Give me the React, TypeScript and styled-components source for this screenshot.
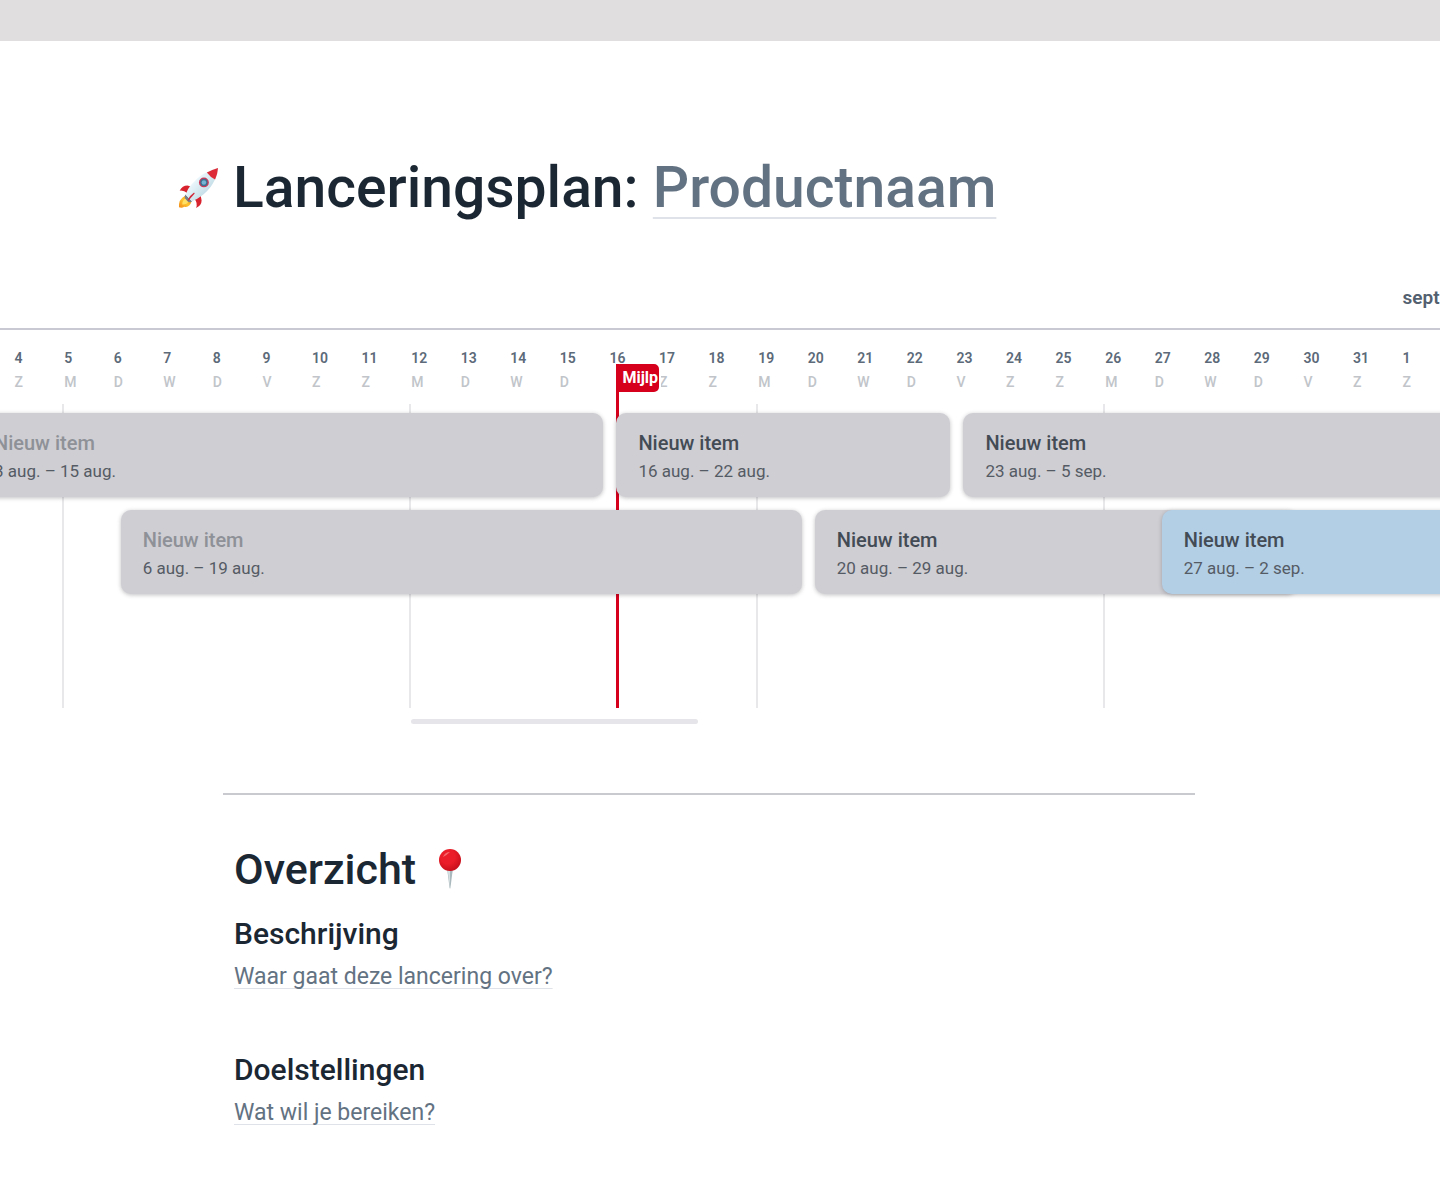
import React from "react";
import styled, { createGlobalStyle } from "styled-components";

const DAYS_SHOWN = 35;

const GlobalStyle = createGlobalStyle`
  *, *::before, *::after { box-sizing: border-box; }
  body {
    margin: 0;
    background: #ffffff;
    color: #1b2733;
    font-family: Roboto, "Liberation Sans", sans-serif;
  }
  h1, h2, h3, p { margin: 0; }
`;

const TopBar = styled.header`
  height: 41px;
  background: #e0dedf;
`;

const Column = styled.div`
  max-width: 972px;
  margin: 0 auto;
`;

const Page = styled.main`
  padding-bottom: 48px;
  overflow: hidden;
`;

const Inset = styled.div`
  padding-right: 22px;
`;

const TitleRow = styled.div`
  display: flex;
  align-items: center;
  gap: 14px;
  margin-left: -46px;
  padding: 113px 0 64px;
`;

const Title = styled.h1`
  font-size: 57px;
  font-weight: 500;
  line-height: 68px;
`;

const Blank = styled.span<{ $offset: number; $thickness: number }>`
  color: #637282;
  text-decoration: underline;
  text-decoration-color: #dfe2e8;
  text-decoration-thickness: ${(p) => p.$thickness}px;
  text-decoration-skip-ink: none;
  text-underline-offset: ${(p) => p.$offset}px;
`;

const Timeline = styled.section`
  overflow: hidden;
`;

const Track = styled.div`
  width: 1735px;
  margin-left: -37px;
`;

const DayGrid = styled.div`
  display: grid;
  grid-template-columns: repeat(${DAYS_SHOWN}, minmax(0, 1fr));
`;

const MonthRow = styled(DayGrid)`
  padding-bottom: 18px;
  border-bottom: 2px solid #c9c9d4;
`;

const Month = styled.span<{ $day: number }>`
  grid-column: ${(p) => p.$day + 1} / span 3;
  padding-left: 2px;
  color: #52606f;
  font-size: 19px;
  font-weight: 600;
  line-height: 24px;
`;

const Board = styled.div`
  position: relative;
  padding-top: 16px;
`;

const Day = styled.div`
  display: flex;
  flex-direction: column;
  padding-left: 2px;
  font-size: 14px;
  line-height: 24px;
`;

const DayNumber = styled.span`
  color: #5c6a79;
  font-weight: 600;
`;

const DayLetter = styled.span`
  color: #c1c5ca;
  font-weight: 500;
`;

const Lanes = styled(DayGrid)`
  grid-template-rows: 84px 84px;
  align-content: start;
  row-gap: 13px;
  height: 304px;
  margin-top: 10px;
  padding-top: 9px;
`;

const WeekLine = styled.div<{ $day: number }>`
  grid-column: ${(p) => p.$day + 1};
  grid-row: 1;
  height: 304px;
  margin-top: -9px;
  border-left: 2px solid #e8e8ea;
`;

const Item = styled.button<{ $start: number; $end: number; $lane: number; $blue?: boolean }>`
  z-index: 1;
  grid-column: ${(p) => p.$start + 1} / ${(p) => p.$end + 2};
  grid-row: ${(p) => p.$lane};
  display: flex;
  flex-direction: column;
  margin: 0 4px 0 9px;
  padding: 16px 22px;
  border: 0;
  border-radius: 10px;
  background: ${(p) => (p.$blue ? "#b3cfe6" : "#cfced3")};
  box-shadow: 0 1px 4px rgba(30, 30, 40, 0.28);
  font-family: inherit;
  line-height: 28px;
  text-align: left;
  white-space: nowrap;
`;

const ItemName = styled.span<{ $past?: boolean }>`
  color: ${(p) => (p.$past ? "#8e9197" : "#434b55")};
  font-size: 20px;
  font-weight: 500;
`;

const ItemDates = styled.span`
  color: #555b64;
  font-size: 17px;
`;

const MilestoneLine = styled.div<{ $day: number }>`
  position: absolute;
  top: 34px;
  bottom: 0;
  left: calc(100% * ${(p) => p.$day} / ${DAYS_SHOWN} + 9px);
  width: 3px;
  background: #d6001c;
`;

const MilestoneFlag = styled.button`
  display: block;
  width: 43px;
  height: 28px;
  padding: 0 0 0 6px;
  border: 0;
  border-radius: 4px 5px 5px 0;
  background: #d6001c;
  box-shadow: 2px 0 0 #ffffff;
  color: #ffffff;
  font-family: inherit;
  font-size: 16px;
  font-weight: 700;
  line-height: 28px;
  text-align: left;
  overflow: hidden;
`;

const ScrollThumb = styled.div`
  width: 287px;
  height: 5px;
  margin: 11px 0 0 411px;
  border-radius: 3px;
  background: #e6e6ea;
`;

const Divider = styled.hr`
  height: 2px;
  margin: 69px 0 48px;
  border: 0;
  background: #c9cacf;
`;

const TextBlock = styled.div`
  padding: 0 11px;
`;

const Overview = styled.h2`
  display: flex;
  align-items: center;
  gap: 21px;
  font-size: 43px;
  font-weight: 500;
  line-height: 52px;
`;

const Question = styled.section`
  display: flex;
  flex-direction: column;
  gap: 11px;
  padding: 21px 0 40px;
`;

const QuestionTitle = styled.h3`
  font-size: 30px;
  font-weight: 500;
  line-height: 36px;
`;

const QuestionText = styled.p`
  font-size: 23px;
  line-height: 28px;
`;

const RocketIcon = () => (
  <svg width="42" height="42" viewBox="22 20 128 128" aria-hidden="true">
    <defs>
      <linearGradient id="hull" x1="0" y1="0" x2="1" y2="1">
        <stop offset="0.3" stopColor="#eef9fd" />
        <stop offset="0.75" stopColor="#bfdae5" />
      </linearGradient>
      <linearGradient id="flame" x1="0" y1="1" x2="1" y2="0">
        <stop offset="0" stopColor="#f28a1c" />
        <stop offset="0.5" stopColor="#fdc62f" />
        <stop offset="1" stopColor="#e8741c" />
      </linearGradient>
    </defs>
    <path d="M30 92 Q38 76 54 76 L66 80 L54 100 Q42 90 30 92Z" fill="#d8232f" />
    <path d="M80 145 Q97 137 97 122 L94 106 L76 118 Q86 130 80 145Z" fill="#d8232f" />
    <path d="M28 143 Q26 118 46 108 L66 126 Q60 145 44 141 Q38 146 28 143Z" fill="url(#flame)" />
    <path d="M38 134 Q38 122 48 116 L57 125 Q52 135 38 134Z" fill="#ffe066" />
    <path d="M48 104 L68 125 Q60 130 54 124 L47 116 Q43 109 48 104Z" fill="#71808c" />
    <path d="M147 23 Q141 76 94 110 Q80 121 68 124 L49 105 Q53 86 69 70 Q98 35 147 23Z" fill="url(#hull)" />
    <path d="M147 23 Q146 41 138 58 Q124 52 113 37 Q129 28 147 23Z" fill="#de2b38" />
    <circle cx="104" cy="67" r="15" fill="#c93a58" />
    <circle cx="104" cy="67" r="11" fill="#3c6f91" />
    <circle cx="104" cy="67" r="7" fill="#75b4d3" />
    <path d="M54 121 Q62 106 74 98 L76 101 Q67 111 57 123Z" fill="#cf2a3c" />
  </svg>
);

const PinIcon = () => (
  <svg width="26" height="42" viewBox="0 0 26 42" aria-hidden="true">
    <defs>
      <radialGradient id="pinHead" cx="0.4" cy="0.35" r="0.65">
        <stop offset="0.5" stopColor="#ea1d28" />
        <stop offset="1" stopColor="#c8101c" />
      </radialGradient>
    </defs>
    <path d="M10 20 L16 20 L13.400 40 Q13 41 12.600 40Z" fill="#a9b9bd" />
    <path d="M10.500 21 L13 21 L13 39Z" fill="#d5dfe1" />
    <circle cx="13" cy="12" r="11" fill="url(#pinHead)" />
    <path d="M6 9 Q8 4 13 4 Q10 7 6 9Z" fill="#f56a6c" />
  </svg>
);

const LETTERS = ["Z", "Z", "M", "D", "W", "D", "V"];
const MILESTONE_DAY = 13;
const days = Array.from({ length: 30 }, (_, i) => ({
  number: i < 29 ? i + 3 : 1,
  letter: i === MILESTONE_DAY ? "" : LETTERS[i % 7],
})).map((day, index) => ({ ...day, index })).slice(1);
const weekStarts = [2, 9, 16, 23];

const DayCell = styled(Day)<{ $index: number }>`
  grid-column: ${(p) => p.$index + 1};
`;

const items = [
  { start: 0, end: 12, lane: 1, dates: "3 aug. – 15 aug.", past: true },
  { start: 13, end: 19, lane: 1, dates: "16 aug. – 22 aug." },
  { start: 20, end: 33, lane: 1, dates: "23 aug. – 5 sep." },
  { start: 3, end: 16, lane: 2, dates: "6 aug. – 19 aug.", past: true },
  { start: 17, end: 26, lane: 2, dates: "20 aug. – 29 aug." },
  { start: 24, end: 30, lane: 2, dates: "27 aug. – 2 sep.", blue: true },
];

const questions = [
  { title: "Beschrijving", text: "Waar gaat deze lancering over?" },
  { title: "Doelstellingen", text: "Wat wil je bereiken?" },
];

export default function App() {
  return (
    <>
      <GlobalStyle />
      <TopBar />
      <Page>
        <Inset>
          <Column>
            <TitleRow>
              <RocketIcon />
              <Title>
                Lanceringsplan: <Blank $offset={10} $thickness={2}>Productnaam</Blank>
              </Title>
            </TitleRow>
          </Column>
        </Inset>

        <Timeline aria-label="Tijdlijn">
          <Track>
            <MonthRow>
              <Month $day={29}>sept</Month>
            </MonthRow>
            <Board>
              <DayGrid>
                {days.map((day) => (
                  <DayCell key={day.index} $index={day.index}>
                    <DayNumber>{day.number}</DayNumber>
                    <DayLetter>{day.letter}</DayLetter>
                  </DayCell>
                ))}
              </DayGrid>
              <MilestoneLine $day={MILESTONE_DAY}>
                <MilestoneFlag type="button">Mijlp</MilestoneFlag>
              </MilestoneLine>
              <Lanes>
                {weekStarts.map((day) => (
                  <WeekLine key={day} $day={day} />
                ))}
                {items.map((item) => (
                  <Item
                    key={item.dates}
                    type="button"
                    $start={item.start}
                    $end={item.end}
                    $lane={item.lane}
                    $blue={item.blue}
                  >
                    <ItemName $past={item.past}>Nieuw item</ItemName>
                    <ItemDates>{item.dates}</ItemDates>
                  </Item>
                ))}
              </Lanes>
            </Board>
          </Track>
          <ScrollThumb />
        </Timeline>

        <Inset>
          <Column>
            <Divider />
            <TextBlock>
              <Overview>
                Overzicht <PinIcon />
              </Overview>
              {questions.map((question) => (
                <Question key={question.title}>
                  <QuestionTitle>{question.title}</QuestionTitle>
                  <QuestionText>
                    <Blank $offset={4} $thickness={1}>{question.text}</Blank>
                  </QuestionText>
                </Question>
              ))}
            </TextBlock>
          </Column>
        </Inset>
      </Page>
    </>
  );
}
